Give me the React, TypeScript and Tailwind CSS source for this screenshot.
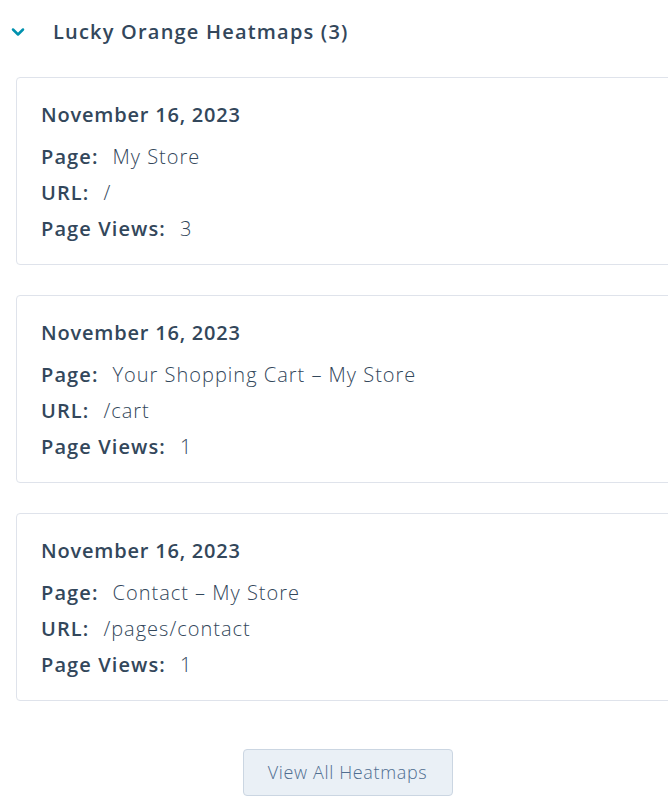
import { ChevronDown } from "lucide-react";

const HEATMAPS = [
  { date: "November 16, 2023", page: "My Store", url: "/", views: 3 },
  { date: "November 16, 2023", page: "Your Shopping Cart – My Store", url: "/cart", views: 1 },
  { date: "November 16, 2023", page: "Contact – My Store", url: "/pages/contact", views: 1 },
];

function Row({ label, value }: { label: string; value: string | number }) {
  return (
    <div className="flex items-baseline h-9 leading-9">
      <span className="font-semibold tracking-[1.1px]">{label}:</span>
      <span className="ml-[14px] font-light tracking-[1px]">{value}</span>
    </div>
  );
}

export default function App() {
  return (
    <div
      className="w-[668px] h-[807px] overflow-hidden bg-white text-[#33475b]"
      style={{ fontFamily: '"Open Sans", "Liberation Sans", sans-serif' }}
    >
      {/* Header */}
      <div className="flex items-center h-16 pl-[8px]">
        <ChevronDown size={20} strokeWidth={3} className="text-[#0091ae]" />
        <h2 className="ml-[25px] text-[20px] font-semibold tracking-[1.2px]">Lucky Orange Heatmaps (3)</h2>
      </div>

      {/* Cards */}
      <div className="ml-4 w-[663px] pt-[13px]">
        <div className="flex flex-col gap-[30px]">
          {HEATMAPS.map((h, i) => (
            <div key={i} className="h-[188px] rounded border border-[#dfe3eb] pl-[24px] pt-[19px] text-[20px]">
              <div className="font-semibold h-9 leading-9 tracking-[0.8px]">{h.date}</div>
              <div className="mt-[6px]">
                <Row label="Page" value={h.page} />
                <Row label="URL" value={h.url} />
                <Row label="Page Views" value={h.views} />
              </div>
            </div>
          ))}
        </div>

        <div className="flex justify-center mt-[48px]">
          <button className="w-[210px] h-[47px] rounded border border-[#cbd6e2] bg-[#eaf0f6] text-[18px] font-light tracking-[0.65px] text-[#506e91]">
            View All Heatmaps
          </button>
        </div>
      </div>
    </div>
  );
}
